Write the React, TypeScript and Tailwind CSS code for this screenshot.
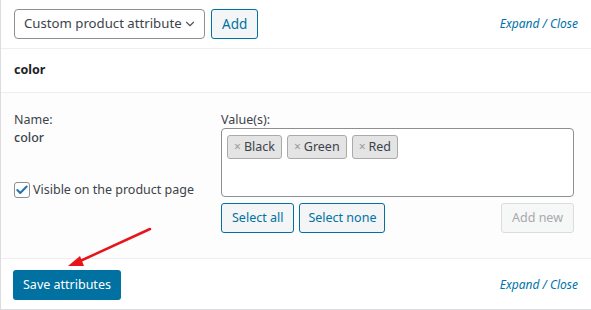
import { ChevronDown, Check } from 'lucide-react';

const font = { fontFamily: '"Noto Sans", "Open Sans", sans-serif' };

function Tag({ label }: { label: string }) {
  return (
    <span className="flex items-center h-[24px] px-[6px] gap-[3px] bg-[#e4e4e4] border border-[#aaa] rounded-[3px] text-[12.5px] text-[#3c434a]">
      <span className="text-[#999] text-[12px] leading-none">×</span>
      {label}
    </span>
  );
}

export default function App() {
  return (
    <div className="w-[591px] h-[310px] bg-white text-[#3c434a] overflow-hidden relative" style={font}>
      <div className="border-l border-b border-[#dcdcde] h-[310px]">
        {/* toolbar */}
        <div className="h-[49px] flex items-center pl-[13px] pr-[13px] border-b border-[#eee]">
          <div className="w-[191px] h-[30px] border border-[#8c8f94] rounded-[4px] flex items-center justify-between pl-[9px] pr-[7px] text-[13.2px] whitespace-nowrap">
            <span>Custom product attribute</span>
            <ChevronDown size={14} strokeWidth={2} className="text-[#50575e]" />
          </div>
          <button className="ml-[6px] h-[30px] px-[10px] border border-[#0071a1] rounded-[3px] bg-[#f3f5f6] text-[#0071a1] text-[13.5px]">
            Add
          </button>
          <span className="ml-auto text-[12px] italic text-[#0073aa]">Expand / Close</span>
        </div>

        {/* attribute heading */}
        <div className="h-[44px] flex items-center pl-[13px] border-b border-[#eee] text-[12.5px] font-bold text-[#1d2327]">
          color
        </div>

        {/* attribute body */}
        <div className="h-[166px] bg-[#fdfdfd] border-b border-[#eee] flex pl-[13px] pr-[17px] pt-[18px]">
          <div className="w-[207px] flex flex-col text-[12.5px]">
            <span className="leading-[18px]">Name:</span>
            <span className="leading-[18px] font-medium">color</span>
            <label className="mt-[34px] flex items-center gap-[3px] whitespace-nowrap">
              <span className="w-[16px] h-[16px] border border-[#8c8f94] rounded-[3px] bg-white flex items-center justify-center">
                <Check size={14} strokeWidth={3.5} className="text-[#2271b1]" />
              </span>
              Visible on the product page
            </label>
          </div>
          <div className="flex-1 flex flex-col text-[12.5px]">
            <span className="leading-[18px]">Value(s):</span>
            <div className="h-[69px] border border-[#8c8f94] rounded-[4px] bg-white flex items-start gap-[5px] pl-[5px] pt-[6px] mt-[-1px]">
              <Tag label="Black" />
              <Tag label="Green" />
              <Tag label="Red" />
            </div>
            <div className="flex mt-[6px] gap-[5px]">
              <button className="h-[30px] px-[10px] border border-[#0071a1] rounded-[3px] bg-[#f3f5f6] text-[#0071a1] text-[12.5px]">
                Select all
              </button>
              <button className="h-[30px] px-[8px] border border-[#0071a1] rounded-[3px] bg-[#f3f5f6] text-[#0071a1] text-[12.5px]">
                Select none
              </button>
              <button className="ml-auto h-[30px] px-[10px] border border-[#dcdcde] rounded-[3px] bg-[#f6f7f7] text-[#a7aaad] text-[12.5px]">
                Add new
              </button>
            </div>
          </div>
        </div>

        {/* footer */}
        <div className="h-[50px] flex items-center pl-[12px] pr-[13px] pt-[2px]">
          <button className="h-[30px] px-[10px] rounded-[3px] bg-[#0071a1] text-white text-[12.5px]">
            Save attributes
          </button>
          <span className="ml-auto text-[12px] italic text-[#0073aa]">Expand / Close</span>
        </div>
      </div>

      {/* annotation arrow */}
      <svg className="absolute left-0 top-0 pointer-events-none" width="591" height="310">
        <line x1="150" y1="229" x2="78" y2="262" stroke="#e8141c" strokeWidth="2.5" strokeLinecap="round" />
        <polygon points="68,266 80,256 84,266" fill="#e8141c" />
      </svg>
    </div>
  );
}
